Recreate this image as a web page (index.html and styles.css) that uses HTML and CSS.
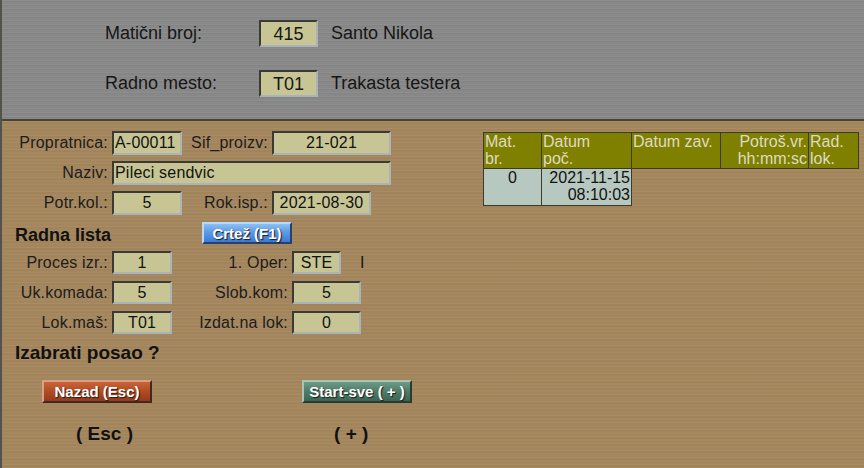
FILE: index.html
```html
<!DOCTYPE html>
<html lang="sr">
<head>
<meta charset="utf-8">
<title>Radna lista</title>
<link rel="stylesheet" href="styles.css">
</head>
<body>
<div class="page">
  <header class="top">
    <div class="hrow">
      <span class="hlabel">Matični broj:</span>
      <span class="hbox">415</span>
      <span class="htext">Santo Nikola</span>
    </div>
    <div class="hrow">
      <span class="hlabel">Radno mesto:</span>
      <span class="hbox">T01</span>
      <span class="htext">Trakasta testera</span>
    </div>
  </header>
  <main class="main">
    <section class="form">
      <div class="row r1">
        <span class="lab l1">Propratnica:</span>
        <span class="box w70 tl">A-00011</span>
        <span class="lab l2">Sif_proizv:</span>
        <span class="box w119">21-021</span>
      </div>
      <div class="row r2">
        <span class="lab l1">Naziv:</span>
        <span class="box w279 tl">Pileci sendvic</span>
      </div>
      <div class="row r3">
        <span class="lab l1">Potr.kol.:</span>
        <span class="box w70">5</span>
        <span class="lab l2">Rok.isp.:</span>
        <span class="box w99">2021-08-30</span>
      </div>
      <div class="row r4">
        <span class="title t1">Radna lista</span>
        <button class="btn blue">Crtež (F1)</button>
      </div>
      <div class="row r5 small">
        <span class="lab l1">Proces izr.:</span>
        <span class="box w60">1</span>
        <span class="lab l3">1. Oper:</span>
        <span class="box w49">STE</span>
        <span class="mark">I</span>
      </div>
      <div class="row r6 small">
        <span class="lab l1">Uk.komada:</span>
        <span class="box w60">5</span>
        <span class="lab l3">Slob.kom:</span>
        <span class="box w69">5</span>
      </div>
      <div class="row r6 small">
        <span class="lab l1">Lok.maš:</span>
        <span class="box w60">T01</span>
        <span class="lab l3">Izdat.na lok:</span>
        <span class="box w69">0</span>
      </div>
      <div class="title t2">Izabrati posao ?</div>
      <div class="row btnrow">
        <button class="btn red">Nazad (Esc)</button>
        <button class="btn green">Start-sve ( + )</button>
      </div>
      <div class="row keyrow">
        <span class="key k1">( Esc )</span>
        <span class="key k2">( + )</span>
      </div>
    </section>
    <section class="list">
      <table class="grid">
        <colgroup>
          <col class="c1"><col class="c2"><col class="c3"><col class="c4"><col class="c5">
        </colgroup>
        <thead>
          <tr>
            <th>Mat.<br>br.</th>
            <th>Datum<br>poč.</th>
            <th>Datum zav.</th>
            <th class="ra">Potroš.vr.<br>hh:mm:sc</th>
            <th>Rad.<br>lok.</th>
          </tr>
        </thead>
        <tbody>
          <tr>
            <td class="fill ctr">0</td>
            <td class="fill ra">2021-11-15<br>08:10:03</td>
            <td class="empty"></td>
            <td class="empty"></td>
            <td class="empty"></td>
          </tr>
        </tbody>
      </table>
    </section>
  </main>
</div>
</body>
</html>
```

FILE: styles.css
```css
* { box-sizing: border-box; }
html, body { margin: 0; padding: 0; }
body {
  width: 864px;
  height: 468px;
  overflow: hidden;
  font-family: "Liberation Sans", Arial, sans-serif;
  color: #161616;
  background: #a6885f;
}
.page {
  width: 864px;
  height: 468px;
  display: flex;
  flex-direction: column;
  border-left: 2px solid #54524c;
}
/* ---------- header ---------- */
.top {
  height: 121px;
  flex: none;
  background-color: #888888;
  background-image:
    repeating-linear-gradient(180deg, rgba(255,255,255,0.05) 0 1px, rgba(0,0,0,0.03) 1px 2px, rgba(255,255,255,0) 2px 4px);
  border-bottom: 2px solid #45443a;
  padding: 20px 0 0 103px;
  display: flex;
  flex-direction: column;
  gap: 23px;
}
.hrow {
  display: flex;
  align-items: center;
  height: 27px;
  font-size: 18px;
}
.hlabel { width: 154px; }
.hbox {
  width: 59px;
  height: 27px;
  line-height: 24px;
  text-align: center;
  background: #c7c593;
  border: 2px solid;
  border-color: #3a3a36 #a9b3b8 #a9b3b8 #3a3a36;
  margin-right: 13px;
}
/* ---------- main ---------- */
.main {
  flex: 1;
  display: flex;
  background-color: #a6885f;
  background-image:
    repeating-linear-gradient(180deg, rgba(255,255,255,0.035) 0 1px, rgba(0,0,0,0.03) 1px 3px, rgba(255,255,255,0) 3px 5px, rgba(0,0,0,0.015) 5px 7px);
}
.form {
  width: 481px;
  flex: none;
  padding-top: 10px;
  display: flex;
  flex-direction: column;
  font-size: 16px;
}
.row { display: flex; align-items: center; }
.r1 { height: 24px; }
.r2 { height: 24px; margin-top: 6px; }
.r3 { height: 24px; margin-top: 6px; }
.r4 { height: 22px; margin-top: 7px; }
.r5 { height: 23px; margin-top: 7px; }
.r6 { height: 23px; margin-top: 7px; }
.lab { text-align: right; color: #1c1c1c; letter-spacing: 0.2px; white-space: nowrap; }
.l1 { width: 106px; margin-right: 4px; }
.l2 { width: 86px; margin-right: 4px; }
.l3 { width: 116px; margin-right: 4px; }
.box {
  height: 24px;
  line-height: 20px;
  text-align: center;
  background: #c7c593;
  border: 2px solid;
  border-color: #3a3a36 #a9b3b8 #a9b3b8 #3a3a36;
  color: #111;
  white-space: nowrap;
  overflow: hidden;
  letter-spacing: 0.2px;
}
.small .box { height: 23px; line-height: 20px; }
.tl { text-align: left; padding-left: 1px; }
.w49 { width: 49px; }
.w60 { width: 60px; }
.w69 { width: 69px; }
.w70 { width: 70px; }
.w99 { width: 99px; }
.w119 { width: 119px; }
.w279 { width: 279px; }
.mark { margin-left: 19px; }
.title {
  font-weight: bold;
  font-size: 18px;
  color: #111;
}
.t1 { width: 200px; padding-left: 13px; padding-top: 4px; }
.t2 { font-size: 19px; padding-left: 13px; margin-top: 8px; height: 22px; line-height: 22px; }
.btn {
  font-family: "Liberation Sans", Arial, sans-serif;
  font-weight: bold;
  font-size: 15px;
  color: #fff;
  text-shadow: 1px 1px 1px #1a1a1a;
  border: 2px solid;
  padding: 0;
  cursor: pointer;
}
.blue {
  width: 90px;
  height: 22px;
  line-height: 17px;
  background: linear-gradient(180deg, #8cc0f4 0%, #5c9ae6 45%, #3d7ad6 100%);
  border-color: #b9d8f8 #29416a #29416a #b9d8f8;
}
.btnrow { height: 23px; margin-top: 16px; }
.red {
  width: 110px;
  height: 23px;
  margin-left: 40px;
  background: linear-gradient(180deg, #c8643a 0%, #b04c22 50%, #98391a 100%);
  border-color: #d9a085 #3e2a22 #3e2a22 #d9a085;
}
.green {
  width: 110px;
  height: 23px;
  margin-left: 150px;
  background: linear-gradient(180deg, #6e9a86 0%, #4e7c69 50%, #3c6654 100%);
  border-color: #a9c4b7 #2a3b33 #2a3b33 #a9c4b7;
}
.keyrow { margin-top: 19px; height: 24px; }
.key { font-weight: bold; font-size: 19px; color: #111; }
.k1 { margin-left: 74px; }
.k2 { margin-left: 201px; }
/* ---------- list ---------- */
.list { padding-top: 11px; }
.grid {
  border-collapse: collapse;
  table-layout: fixed;
  width: 375px;
  font-size: 16px;
}
.c1 { width: 58px; }
.c2 { width: 90px; }
.c3 { width: 89px; }
.c4 { width: 88px; }
.c5 { width: 50px; }
.grid th, .grid td {
  border: 1px solid #3c3a2a;
  padding: 0 1px;
  line-height: 17px;
  height: 36px;
  vertical-align: top;
  text-align: left;
  font-weight: normal;
  white-space: nowrap;
  overflow: hidden;
}
.grid th {
  background: #808000;
  color: #dedbc4;
}
.grid td { height: 37px; color: #111; }
.grid .fill { background: #b7c8c0; }
.grid .empty { border: none; background: transparent; }
.grid .ra { text-align: right; }
.grid .ctr { text-align: center; }
```
